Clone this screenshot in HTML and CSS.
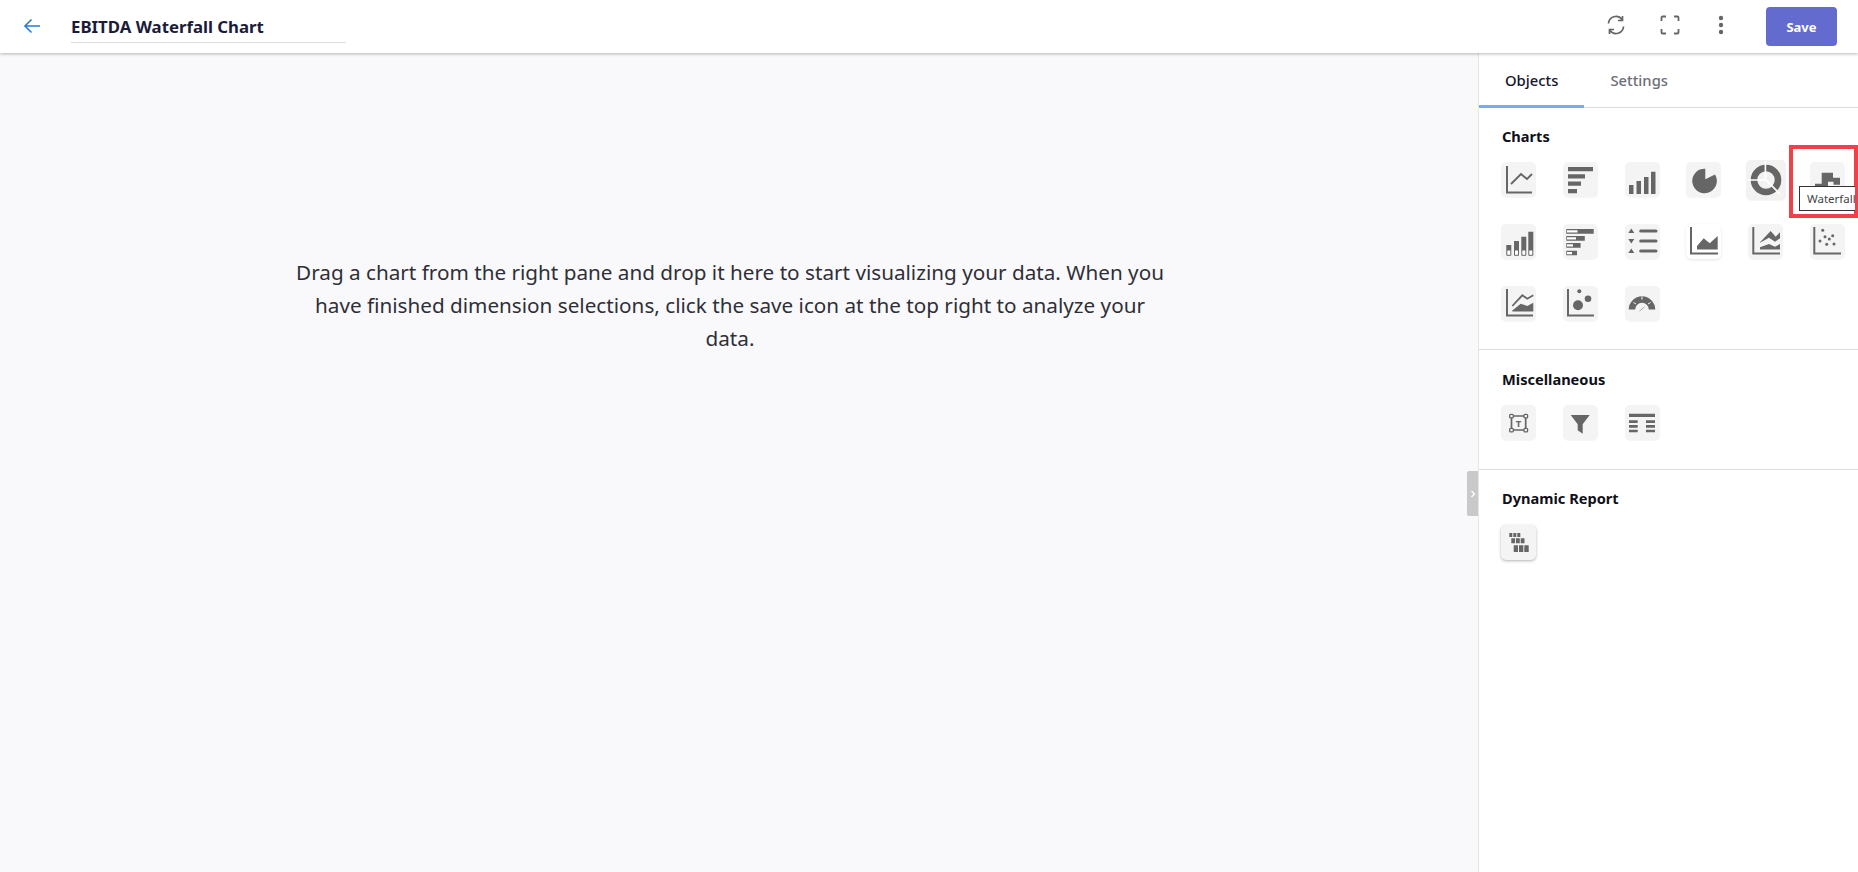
FILE: index.html
```html
<!DOCTYPE html>
<html lang="en">
<head>
<meta charset="utf-8">
<title>EBITDA Waterfall Chart</title>
<link rel="stylesheet" href="styles.css">
</head>
<body>
<header class="topbar">
  <svg class="back" viewBox="0 0 18 18" width="18" height="18"><path d="M17 9H2M8.500 2.500 2 9l6.500 6.500" fill="none" stroke="#2a7bd1" stroke-width="1.600"/></svg>
  <div class="title">EBITDA Waterfall Chart</div>
  <div class="actions">
    <svg class="act" viewBox="0 0 20 20" width="20" height="20"><path d="M2.500 8.500A7.500 7.500 0 0 1 16 4.500M17.500 11.500A7.500 7.500 0 0 1 4 15.500M16.500 1v4.500h-4.500M3.500 19v-4.500h4.500" fill="none" stroke="#666" stroke-width="1.700"/></svg>
    <svg class="act" viewBox="0 0 20 20" width="20" height="20"><path d="M1.500 6V2.500a1 1 0 0 1 1-1H6M14 1.500h3.500a1 1 0 0 1 1 1V6M18.500 14v3.500a1 1 0 0 1-1 1H14M6 18.500H2.500a1 1 0 0 1-1-1V14" fill="none" stroke="#666" stroke-width="1.800"/></svg>
    <svg class="act dots" viewBox="0 0 6 20" width="6" height="20"><circle cx="3" cy="3" r="2.200" fill="#666"/><circle cx="3" cy="10" r="2.200" fill="#666"/><circle cx="3" cy="17" r="2.200" fill="#666"/></svg>
    <button class="save">Save</button>
  </div>
</header>
<div class="main">
  <section class="canvas">
    <p class="hint">Drag a chart from the right pane and drop it here to start visualizing your data. When you have finished dimension selections, click the save icon at the top right to analyze your data.</p>
    <div class="handle"><svg viewBox="0 0 6 8" width="6" height="8"><path d="M1.500 1 4.500 4l-3 3" fill="none" stroke="#fff" stroke-width="1.300"/></svg></div>
  </section>
  <aside class="pane">
    <nav class="tabs">
      <div class="tab active">Objects</div>
      <div class="tab">Settings</div>
    </nav>
    <section class="group charts">
      <h3>Charts</h3>
      <div class="icons">
        <div class="ic"><svg viewBox="0 0 34 34"><path d="M5 3v26.500h25" fill="none" stroke="#666" stroke-width="2"/><path d="M9 21l10-10 6 5 5-5" fill="none" stroke="#666" stroke-width="1.900"/></svg></div>
        <div class="ic"><svg viewBox="0 0 34 34"><path d="M5 4h25v4.200H5zM5 11.300h17v4.200H5zM5 18.600h13v4.200H5zM5 26h9v4.200H5z" fill="#666"/></svg></div>
        <div class="ic"><svg viewBox="0 0 34 34"><path d="M4 22h4.500v9H4zM11.500 18H16v13h-4.500zM19 14h4.500v17H19zM26 8.700h4.500V31H26z" fill="#666"/></svg></div>
        <div class="ic"><svg viewBox="0 0 34 34"><path d="M18.300 16.300 28 11.500A12.300 12.300 0 1 1 18.300 5.700z" fill="#666"/></svg></div>
        <div class="ic big"><svg viewBox="0 0 34 34"><circle cx="17" cy="17" r="10.200" fill="none" stroke="#666" stroke-width="5.600"/><path d="M16.500 1v16H1M17 17l12 12" fill="none" stroke="#fff" stroke-width="1.400"/></svg></div>
        <div class="ic"><svg viewBox="0 0 34 34"><path d="M5 20.700h6.700v-11H23v5h7v7h-6.500v-3H18V28H5z" fill="#666"/></svg></div>

        <div class="ic"><svg viewBox="0 0 34 34"><path d="M4.300 21h5v5h-5zM12 17h5v9h-5zM19.300 12.700h5V26h-5zM26.300 7.700h5V26h-5z" fill="#666"/><path d="M4.800 26h4v5.300h-4zM12.500 26h4v5.300h-4zM19.800 26h4v5.300h-4zM26.800 26h4v5.300h-4z" fill="#fff" stroke="#666"/></svg></div>
        <div class="ic"><svg viewBox="0 0 34 34"><path d="M3.300 5h27.400v4.700H3.300zM3.300 12h18.500v4.700H3.300zM3.300 19h14.300v4.700H3.300zM3.300 26.700H14v4.600H3.300z" fill="#666" /><path d="M4 6.200h10.500v2.300H4zM4 13.200h9v2.300H4zM4 20.200h6v2.300H4zM4 27.900h5v2.300H4z" fill="#fff"/></svg></div>
        <div class="ic"><svg viewBox="0 0 34 34"><path d="M15.700 7H31M15.700 17H31M15.700 27H31" stroke="#666" stroke-width="3" stroke-linecap="round" fill="none"/><path d="M6.300 4.500l3 4.500h-6zM3.300 15h6l-3 4.500zM6.300 24.500l3 4.500h-6z" fill="#666"/></svg></div>
        <div class="ic white"><svg viewBox="0 0 34 34"><path d="M4 3v26.500h27" fill="none" stroke="#666" stroke-width="2"/><path d="M10 25.500V22l6.700-7.700 6 5 8-7.300v13.500z" fill="#666"/></svg></div>
        <div class="ic"><svg viewBox="0 0 34 34"><path d="M4.300 3v26.500H31" fill="none" stroke="#666" stroke-width="2"/><path d="M11 18.300 21.700 7l5 5.700L31 8.300v6l-5 3.400-6-4-9 5zM11 25.500v-2.200L20 20l6 2.700 5-2.700v5.500z" fill="#666"/></svg></div>
        <div class="ic"><svg viewBox="0 0 34 34"><path d="M4.300 3v26.500H31" fill="none" stroke="#666" stroke-width="2"/><g fill="#666"><circle cx="12.700" cy="6.300" r="1.500"/><circle cx="15" cy="12.700" r="1.500"/><circle cx="22.700" cy="11.700" r="1.500"/><circle cx="10" cy="17" r="1.500"/><circle cx="19.300" cy="15" r="1.500"/><circle cx="16.700" cy="20.300" r="1.500"/><circle cx="24" cy="20" r="1.500"/></g></svg></div>

        <div class="ic"><svg viewBox="0 0 34 34"><path d="M5 3v26.500h26" fill="none" stroke="#666" stroke-width="2"/><path d="M10.300 20 20.300 9.300l5 3.400 6-3.400" fill="none" stroke="#666" stroke-width="1.800"/><path d="M10.300 25.500v-1L18.700 17.700l6.600 2.300 6-3.300v8.800z" fill="#666"/></svg></div>
        <div class="ic"><svg viewBox="0 0 34 34"><path d="M5 3v26.500h26" fill="none" stroke="#666" stroke-width="2"/><g fill="#666"><circle cx="15" cy="19.300" r="5"/><circle cx="25" cy="12.700" r="3.300"/><circle cx="16.300" cy="5.300" r="2"/></g></svg></div>
        <div class="ic"><svg viewBox="0 0 34 34"><path d="M7 23.500a10 10 0 0 1 20 0" fill="none" stroke="#666" stroke-width="6.500"/><path d="M8.500 16.500l2.500 1.500M17 10.500v3M25.500 16.500 23 18" stroke="#f4f4f4" stroke-width="1"/><path d="M14.500 25l5-4" stroke="#aaa" stroke-width="1"/></svg></div>
      </div>
    </section>
    <section class="group misc">
      <h3>Miscellaneous</h3>
      <div class="icons">
        <div class="ic"><svg viewBox="0 0 34 34"><path d="M9.500 10h14.200v14H9.500z" fill="none" stroke="#666" stroke-width="1.700"/><g fill="#f4f4f4" stroke="#666" stroke-width="1.300"><rect x="7.700" y="8.300" width="3.600" height="3.600" rx="1"/><rect x="22" y="8.300" width="3.600" height="3.600" rx="1"/><rect x="7.700" y="22.300" width="3.600" height="3.600" rx="1"/><rect x="22" y="22.300" width="3.600" height="3.600" rx="1"/></g><text x="16.600" y="20.800" class="svgt">T</text></svg></div>
        <div class="ic"><svg viewBox="0 0 34 34"><path d="M7.700 9h19l-7 9.300v9.500l-5-3.500v-6z" fill="#666"/></svg></div>
        <div class="ic"><svg viewBox="0 0 34 34"><path d="M4 7.700h26V11H4zM4 14.300h8.700V17H4zM21 14.300h9V17h-9zM4 19h8.700v2.700H4zM21 19h9v2.700h-9zM4 23.700h8.700v2.600H4zM21 23.700h9v2.600h-9z" fill="#666"/></svg></div>
      </div>
    </section>
    <section class="group dyn">
      <h3>Dynamic Report</h3>
      <div class="icons">
        <div class="ic raised"><svg viewBox="0 0 34 34"><path d="M7.300 7h3v4h-3zM11.300 7h3v4h-3zM15.300 7h3v4h-3zM9.300 12.300h3.800v5H9.300zM14 12.300h3.800v5H14zM18.700 12.300h3.800v5h-3.800zM11.700 19.300h4.300V26h-4.300zM17 19.300h4.300V26H17zM22.300 19.300h4.400V26h-4.400z" fill="#666"/></svg></div>
      </div>
    </section>
    <div class="mark"></div>
    <div class="tip">Waterfall</div>
  </aside>
</div>
</body>
</html>
```

FILE: styles.css
```css
* { box-sizing: border-box; }
html, body { margin: 0; height: 100%; overflow: hidden; }
body {
  font-family: "Noto Sans", "Open Sans", sans-serif;
  background: #f9f9fb;
  color: #14142b;
}
.topbar {
  height: 53px;
  background: #fff;
  display: flex;
  align-items: center;
  padding: 0 21px 0 23px;
  box-shadow: 0 1px 3px rgba(0, 0, 0, .28);
  position: relative;
  z-index: 2;
}
.back { flex: none; margin-bottom: 2px; }
.title {
  align-self: flex-start;
  margin-left: 30px;
  width: 275px;
  height: 43px;
  padding-top: 14px;
  border-bottom: 1px solid #dedede;
  font-size: 16.800px;
  font-weight: 700;
  line-height: 25px;
  color: #1b1b3a;
}
.actions { margin-left: auto; display: flex; align-items: center; }
.act { flex: none; margin-bottom: 3px; }
.act:nth-child(1) { margin-right: 34px; }
.act:nth-child(2) { margin-right: 38px; }
.dots { margin-right: 42px; }
.save {
  width: 71px;
  height: 39px;
  border: 0;
  border-radius: 4px;
  background: #636bcf;
  color: #fff;
  font: 700 13px "Noto Sans", sans-serif;
}
.main { display: flex; height: 819px; }
.canvas {
  flex: 1;
  position: relative;
  display: flex;
  justify-content: center;
  align-items: flex-start;
}
.hint {
  margin: 203px 18px 0 0;
  width: 880px;
  text-align: center;
  font-size: 20.700px;
  line-height: 33px;
  color: #2f2f38;
}
.handle {
  position: absolute;
  right: 0;
  top: 418px;
  width: 11px;
  height: 45px;
  background: #c9c9c9;
  border-radius: 2px 0 0 2px;
  display: flex;
  align-items: center;
  justify-content: center;
}
.handle svg { display: block; }
.pane {
  width: 380px;
  background: #fff;
  border-left: 1px solid #e6e6e6;
  position: relative;
}
.tabs { display: flex; height: 55px; border-bottom: 1px solid #dcdcdc; }
.tab {
  font-size: 14.800px;
  font-weight: 500;
  line-height: 55px;
  color: #6e6e78;
  padding: 0 26px;
}
.tab.active {
  color: #14142b;
  border-bottom: 3px solid #7aa9f5;
  height: 55px;
  line-height: 55px;
}
.group { padding: 19px 0 0 22px; border-bottom: 1px solid #dedede; }
.group h3 {
  margin: 0 0 16px;
  padding-left: 1px;
  font-size: 14.600px;
  font-weight: 700;
  line-height: 20px;
  color: #101018;
}
.charts { padding-top: 18px; height: 242px; }
.misc { height: 120px; }
.dyn { padding-top: 18px; border-bottom: 0; }
.dyn h3 { margin-bottom: 17px; }
.icons {
  display: grid;
  grid-template-columns: repeat(6, 35px);
  grid-auto-rows: 35px;
  gap: 26.800px;
}
.ic {
  width: 35px;
  height: 35px;
  background: #f4f4f4;
  border-radius: 5px;
  box-shadow: 0 1px 1px rgba(0, 0, 0, .04);
  display: flex;
  align-items: center;
  justify-content: center;
}
.ic svg { flex: none; width: 34px; height: 34px; display: block; }
.ic.big { width: 40px; height: 40px; margin: -2px 0 0 -2px; background: #f2f2f2; }
.ic.big svg { width: 40px; height: 40px; }
.ic.white { background: #fff; box-shadow: 0 1px 3px rgba(0, 0, 0, .1); }
.ic.raised { box-shadow: 0 1px 3px rgba(0, 0, 0, .3); }
.svgt { font: 700 9.500px "Noto Sans", sans-serif; fill: #666; text-anchor: middle; }
.mark {
  position: absolute;
  left: 310px;
  top: 92px;
  width: 69px;
  height: 73px;
  border: 4px solid #f04048;
}
.tip {
  position: absolute;
  left: 320px;
  top: 133px;
  width: 56px;
  height: 25px;
  background: #fff;
  border: 1px solid #333;
  border-right: 0;
  font-size: 11.500px;
  line-height: 23px;
  padding-left: 7px;
  color: #444;
  overflow: hidden;
  white-space: nowrap;
}
```
